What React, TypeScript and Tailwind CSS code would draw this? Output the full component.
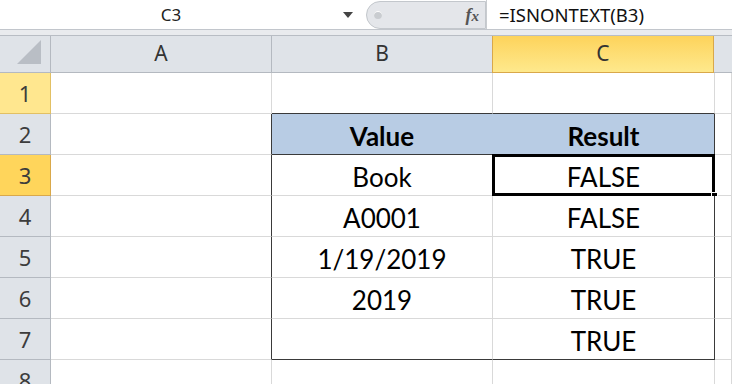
import React from "react";

const GR = "border-r-[#d9d9d9]";
const GB = "border-b-[#d9d9d9]";
const DR = "border-r-[#3a3a3a]";
const DB = "border-b-[#3a3a3a]";

type Cell = { text?: string; bold?: boolean; fill?: string; r?: string; b?: string };

function Row({ n, hdr, cells }: { n: number; hdr: string; cells: Cell[] }) {
  return (
    <div className="flex h-[41px]">
      <div
        className={`w-[51px] shrink-0 flex items-center justify-center border-r border-b ${hdr} text-[22px] leading-none text-[#3c3c3c]`}
        style={{ fontFamily: "'Noto Sans', sans-serif" }}
      >
        {n}
      </div>
      {cells.map((c, i) => (
        <div
          key={i}
          className={`relative shrink-0 ${i === 0 ? "w-[221px]" : i === 1 ? "w-[221px]" : i === 2 ? "w-[222px]" : "flex-1"} flex items-start justify-center pt-[9px] leading-none border-r border-b ${c.r ?? GR} ${c.b ?? GB} ${c.fill ?? "bg-white"} text-[26px] text-black ${c.bold ? "font-bold" : ""}`}
          style={{ fontFamily: "Lato, 'Open Sans', sans-serif" }}
        >
          {c.text}
        </div>
      ))}
    </div>
  );
}

export default function App() {
  const greyHdr = "bg-[#dfe3e8] border-[#b4b9c0]";
  const data: [string, string][] = [
    ["Book", "FALSE"],
    ["A0001", "FALSE"],
    ["1/19/2019", "TRUE"],
    ["2019", "TRUE"],
    ["", "TRUE"],
  ];
  return (
    <div className="w-[732px] h-[384px] overflow-hidden bg-white relative">
      {/* Formula bar */}
      <div className="flex h-[30px] border-b border-[#c2c6cc] bg-white" style={{ fontFamily: "'Noto Sans', sans-serif" }}>
        <div className="w-[366px] flex items-center relative">
          <div className="flex-1 text-center text-[17px] text-[#222]">C3</div>
          <svg width="12" height="8" viewBox="0 0 12 8" className="mr-[12px]">
            <path d="M1 1 L11 1 L6 7 Z" fill="#444" />
          </svg>
        </div>
        <div className="w-[120px] h-[28px] mt-[1px] flex items-center bg-[#e4e6ea] border border-[#c3c7cc] rounded-l-[14px] relative">
          <div className="w-[8px] h-[8px] rounded-full bg-[#c9ccd0] ml-[7px] shadow-[inset_0_1px_0_#fff]" />
          <span
            className="ml-auto mr-[6px] text-[18px] italic font-bold text-[#555]"
            style={{ fontFamily: "'Liberation Serif', serif" }}
          >
            f<span className="text-[15px]">x</span>
          </span>
        </div>
        <div className="flex-1 flex items-center pl-[12px] text-[18.5px] text-[#111] border-l border-[#c9ccd0]">
          =ISNONTEXT(B3)
        </div>
      </div>
      <div className="h-[6px] bg-[#e9ebee] border-b border-[#b8bdc4]" />
      {/* Column headers */}
      <div className="flex h-[37px] text-[21px] text-[#333]" style={{ fontFamily: "'Noto Sans', sans-serif" }}>
        <div className="w-[51px] shrink-0 bg-[#dfe3e8] border-r border-b border-[#b4b9c0] relative">
          <svg width="30" height="30" viewBox="0 0 30 30" className="absolute right-[5px] bottom-[4px]">
            <path d="M26 2 L26 26 L2 26 Z" fill="#b9bec5" />
          </svg>
        </div>
        <div className="w-[221px] shrink-0 flex items-center justify-center bg-[#dfe3e8] border-r border-b border-[#b4b9c0]">A</div>
        <div className="w-[221px] shrink-0 flex items-center justify-center bg-[#dfe3e8] border-r border-b border-[#b4b9c0]">B</div>
        <div className="w-[222px] shrink-0 flex items-center justify-center bg-gradient-to-b from-[#fdd35a] to-[#fee98c] border-l border-r border-b border-[#d9a84a] -ml-[1px]">C</div>
        <div className="flex-1 bg-[#dfe3e8] border-b border-[#b4b9c0]" />
      </div>
      {/* Rows */}
      <Row n={1} hdr="bg-[#ffe78f] border-[#e2c064]" cells={[{}, { b: DB }, { b: DB }, {}]} />
      <Row
        n={2}
        hdr={greyHdr}
        cells={[
          { r: DR },
          { text: "Value", bold: true, fill: "bg-[#b8cce4]", b: DB, r: "border-r-[#b8cce4]" },
          { text: "Result", bold: true, fill: "bg-[#b8cce4]", b: DB, r: DR },
          {},
        ]}
      />
      {data.map(([v, r], i) => {
        const n = i + 3;
        const last = n === 7;
        return (
          <div key={n} className="relative">
            <Row
              n={n}
              hdr={n === 3 ? "bg-[#ffd55b] border-[#d9a84a]" : greyHdr}
              cells={[
                { r: DR },
                { text: v, b: last ? DB : GB },
                { text: r, b: last ? DB : GB, r: DR },
                {},
              ]}
            />
            {n === 3 && (
              <>
                <div className="absolute left-[492px] top-[-1px] w-[223px] h-[42px] border-[3px] border-black pointer-events-none" />
                <div className="absolute left-[711px] top-[37px] w-[7px] h-[7px] bg-black border border-white" />
              </>
            )}
          </div>
        );
      })}
      <Row n={8} hdr={greyHdr} cells={[{}, {}, {}, {}]} />
    </div>
  );
}
